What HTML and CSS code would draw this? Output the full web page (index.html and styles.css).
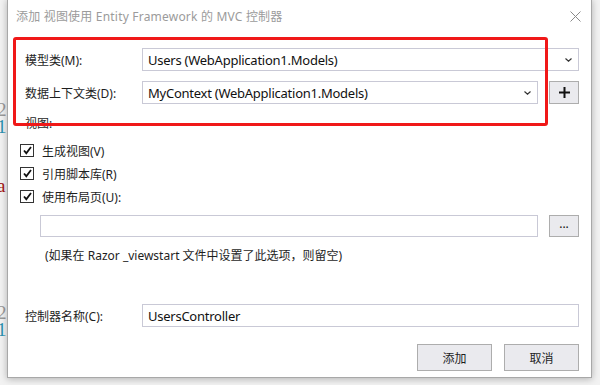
FILE: index.html
```html
<!DOCTYPE html>
<html lang="zh-CN">
<head>
<meta charset="utf-8">
<title>添加 视图使用 Entity Framework 的 MVC 控制器</title>
<link rel="stylesheet" href="styles.css">
</head>
<body>
<div class="desktop">
  <span class="bg-char bg-gray bg-a">2</span>
  <span class="bg-char bg-blue bg-b">1</span>
  <span class="bg-char bg-red bg-c">a</span>
  <span class="bg-char bg-gray bg-d">2</span>
  <span class="bg-char bg-blue bg-e">1</span>

  <div class="dialog">
    <div class="titlebar">
      <span class="title">添加 视图使用 Entity Framework 的 MVC 控制器</span>
      <svg class="close" width="11" height="11" viewBox="0 0 11 11"><path d="M0.5 0.5 L10.5 10.5 M10.5 0.5 L0.5 10.5" stroke="#8a8a8a" stroke-width="1" fill="none"/></svg>
    </div>
    <div class="form">
      <div class="row">
        <label class="label">模型类(M):</label>
        <div class="combo grow">
          <span class="value">Users (WebApplication1.Models)</span>
          <svg class="chev" width="7" height="4" viewBox="0 0 7 4"><path d="M0.5 0.5 L3.5 3.2 L6.5 0.5" stroke="#333" stroke-width="1.2" fill="none"/></svg>
        </div>
      </div>
      <div class="row row2">
        <label class="label">数据上下文类(D):</label>
        <div class="combo grow">
          <span class="value">MyContext (WebApplication1.Models)</span>
          <svg class="chev" width="7" height="4" viewBox="0 0 7 4"><path d="M0.5 0.5 L3.5 3.2 L6.5 0.5" stroke="#333" stroke-width="1.2" fill="none"/></svg>
        </div>
        <button class="btn-small"><svg width="11" height="11" viewBox="0 0 11 11"><path d="M5.5 0 V11 M0 5.5 H11" stroke="#111" stroke-width="2"/></svg></button>
      </div>
      <div class="section">视图:</div>
      <div class="check-row"><span class="box"><svg width="11" height="11" viewBox="0 0 11 11"><path d="M2 5.5 L4.3 8.2 L9 2" stroke="#111" stroke-width="1.8" fill="none"/></svg></span><span>生成视图(V)</span></div>
      <div class="check-row"><span class="box"><svg width="11" height="11" viewBox="0 0 11 11"><path d="M2 5.5 L4.3 8.2 L9 2" stroke="#111" stroke-width="1.8" fill="none"/></svg></span><span>引用脚本库(R)</span></div>
      <div class="check-row"><span class="box"><svg width="11" height="11" viewBox="0 0 11 11"><path d="M2 5.5 L4.3 8.2 L9 2" stroke="#111" stroke-width="1.8" fill="none"/></svg></span><span>使用布局页(U):</span></div>
      <div class="layout-row">
        <div class="text grow"></div>
        <button class="btn-small dots">...</button>
      </div>
      <div class="note">(如果在 Razor _viewstart 文件中设置了此选项，则留空)</div>
      <div class="row ctrl-row">
        <label class="label">控制器名称(C):</label>
        <div class="text grow"><span class="value">UsersController</span></div>
      </div>
      <div class="actions">
        <button class="btn">添加</button>
        <button class="btn">取消</button>
      </div>
    </div>
    <div class="highlight"></div>
  </div>
</div>
</body>
</html>
```

FILE: styles.css
```css
* { box-sizing: border-box; }
html, body { margin: 0; padding: 0; }
body {
  width: 600px;
  height: 385px;
  overflow: hidden;
  background: #f2f2f2;
  font-family: "Noto Sans", "Noto Sans CJK SC", sans-serif;
  font-size: 12px;
  color: #1e1e1e;
}
.desktop { position: relative; width: 600px; height: 385px; }
.bg-char {
  position: absolute;
  left: -3px;
  font-family: "Liberation Serif", serif;
  font-size: 19px;
  line-height: 16px;
  height: 16px;
}
.bg-gray { color: #9a9a9a; }
.bg-blue { color: #2b91af; }
.bg-red { color: #a31515; }
.bg-a { top: 102px; }
.bg-b { top: 119px; }
.bg-c { top: 178px; }
.bg-d { top: 305px; }
.bg-e { top: 322px; }

.dialog {
  position: absolute;
  left: 7px;
  top: -1px;
  width: 585px;
  height: 379px;
  background: #fff;
  border: 1px solid #a8a8a8;
  box-shadow: 0 1px 7px rgba(0,0,0,0.28);
}
.titlebar {
  height: 32px;
  display: flex;
  align-items: center;
  justify-content: space-between;
  padding: 0 10px 0 8px;
}
.title {
  font-family: "Noto Sans", "Noto Sans CJK SC", sans-serif;
  font-size: 12px;
  letter-spacing: 0.2px;
  color: #9b9b9b;
}
.close { margin-top: 1px; }

.form {
  padding: 16px 12px 0 17px;
  display: flex;
  flex-direction: column;
}
.row {
  display: flex;
  align-items: center;
  height: 23px;
}
.row2 { margin-top: 10px; }
.label { width: 117px; flex: none; white-space: nowrap; }
.grow { flex: 1; }
.combo, .text {
  height: 23px;
  border: 1px solid #c9c9d6;
  display: flex;
  align-items: center;
  padding: 0 6px 0 5px;
  justify-content: space-between;
  background: #fff;
}
.value {
  font-size: 13px;
  letter-spacing: -0.25px;
  color: #111;
  white-space: nowrap;
}
.chev { flex: none; }
.btn-small {
  width: 30px;
  height: 23px;
  margin-left: 11px;
  flex: none;
  background: #eaeaee;
  border: 1px solid #adadad;
  display: flex;
  align-items: center;
  justify-content: center;
  padding: 0;
  font-family: inherit;
}
.dots { height: 22px; font-size: 12px; line-height: 1; color: #111; padding-bottom: 4px; }
.section { margin-top: 12px; height: 16px; line-height: 16px; }
.check-row {
  height: 23px;
  display: flex;
  align-items: center;
  margin-left: -5px;
}
.section + .check-row { margin-top: 7px; }
.box {
  width: 14px;
  height: 13px;
  border: 1px solid #333;
  background: #fff;
  display: flex;
  align-items: center;
  justify-content: center;
  margin-right: 8px;
}
.layout-row {
  display: flex;
  align-items: center;
  margin-top: 7px;
  margin-left: 15px;
  height: 22px;
}
.layout-row .text { height: 22px; }
.note {
  margin-top: 11px;
  margin-left: 20px;
  height: 16px;
  line-height: 16px;
}
.ctrl-row { margin-top: 40px; }
.actions {
  margin-top: 17px;
  display: flex;
  justify-content: flex-end;
  gap: 12px;
}
.btn {
  width: 75px;
  height: 27px;
  background: #eaeaee;
  border: 1px solid #adadad;
  font-family: "Noto Sans CJK SC", sans-serif;
  font-size: 12px;
  color: #1e1e1e;
  padding: 0;
}
.highlight {
  position: absolute;
  left: 5px;
  top: 37px;
  width: 535px;
  height: 89px;
  border: 3px solid #f01818;
  border-radius: 3px;
  pointer-events: none;
}
```
